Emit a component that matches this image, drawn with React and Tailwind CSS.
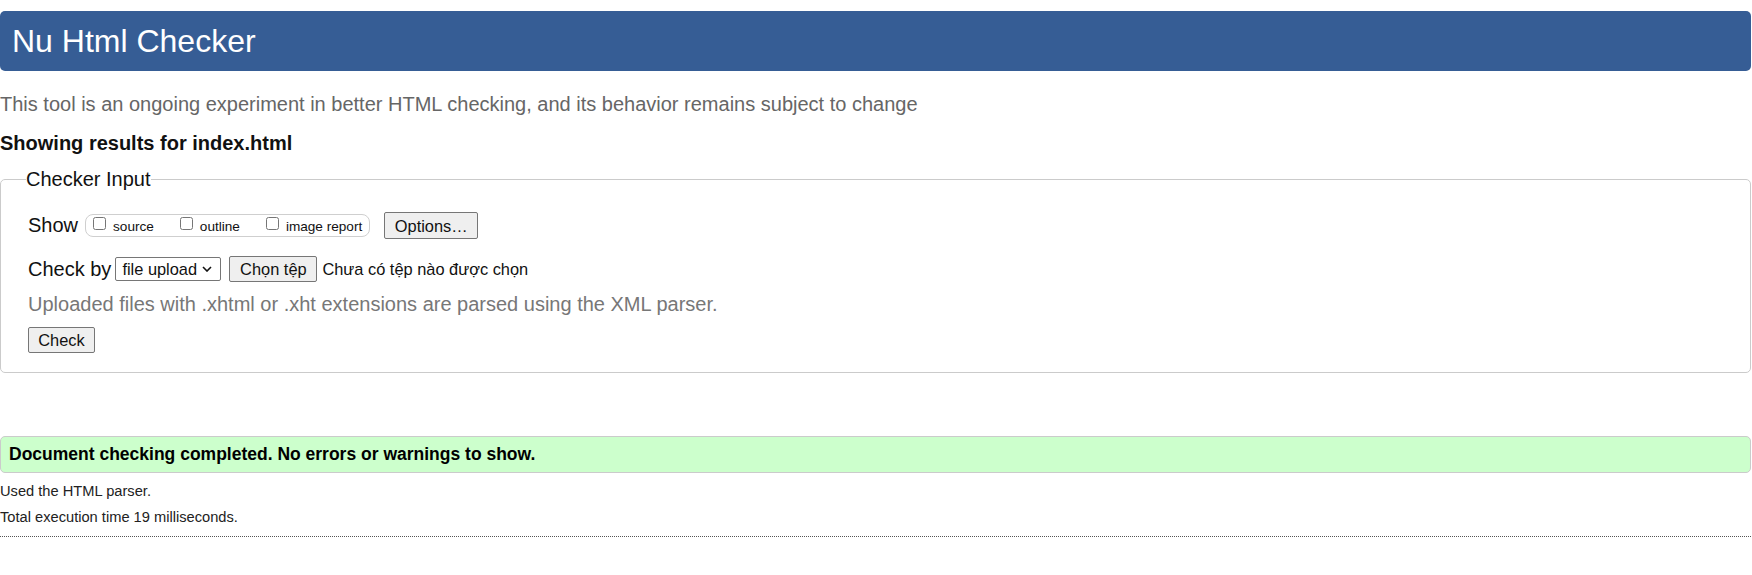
import { useState } from "react";

function Chevron() {
  return (
    <svg
      width="10"
      height="6"
      viewBox="0 0 10 6"
      className="pointer-events-none absolute right-[9px] top-1/2 -translate-y-1/2"
    >
      <path d="M1 1 L5 5 L9 1" fill="none" stroke="#111" strokeWidth="1.6" />
    </svg>
  );
}

export default function App() {
  const [show, setShow] = useState({ source: false, outline: false, image: false });
  const [method, setMethod] = useState("file");

  const toggle = (k) => setShow({ ...show, [k]: !show[k] });

  return (
    <div className="min-h-screen bg-white pt-[11px] pb-[40px] font-['Liberation_Sans',Arial,sans-serif] text-[#111]">
      {/* header */}
      <h1 className="mr-[1px] flex h-[60px] items-center rounded-[5px] bg-[#365d95] px-[12px] text-[32px] font-normal leading-[37px] text-white">
        Nu Html Checker
      </h1>

      <p className="mt-[22px] text-[20px] leading-[23px] text-[#666]">
        This tool is an ongoing experiment in better HTML checking, and its behavior remains subject to change
      </p>

      <p className="mt-[16px] text-[20px] font-bold leading-[23px] text-[#111]">
        Showing results for index.html
      </p>

      {/* checker input */}
      <fieldset className="mt-[13px] mr-[1px] rounded-[5px] border border-[#cbcbcb] pb-[19px] pl-[25px] pr-[25px]">
        <legend className="text-[20px] leading-[23px] text-[#111]">Checker Input</legend>

        <div className="pl-[2px]">
          <div className="mt-[21px] flex h-[27px] items-center">
            <span className="text-[20px] leading-[23px]">Show</span>
            <div className="ml-[7px] flex h-[23px] items-center rounded-[8px] border border-[#cfcfcf] pl-[7px] pr-[7px] text-[13.6px] leading-[16px]">
              <label className="flex items-center">
                <input
                  type="checkbox"
                  checked={show.source}
                  onChange={() => toggle("source")}
                  className="m-0 mr-[7px] -mt-[4px] h-[13px] w-[13px]"
                />
                <span className="mt-[2px]">source</span>
              </label>
              <label className="ml-[26px] flex items-center">
                <input
                  type="checkbox"
                  checked={show.outline}
                  onChange={() => toggle("outline")}
                  className="m-0 mr-[7px] -mt-[4px] h-[13px] w-[13px]"
                />
                <span className="mt-[2px]">outline</span>
              </label>
              <label className="ml-[26px] flex items-center">
                <input
                  type="checkbox"
                  checked={show.image}
                  onChange={() => toggle("image")}
                  className="m-0 mr-[7px] -mt-[4px] h-[13px] w-[13px]"
                />
                <span className="mt-[2px]">image report</span>
              </label>
            </div>
            <button className="ml-[14px] h-[27px] w-[94px] rounded-[2px] border border-[#767676] bg-[#efefef] text-[16.4px] leading-[20px] text-[#111]">
              Options…
            </button>
          </div>

          <div className="mt-[17px] flex h-[26px] items-center">
            <span className="text-[20px] leading-[23px]">Check by</span>
            <div className="relative ml-[4px]">
              <select
                value={method}
                onChange={(e) => setMethod(e.target.value)}
                className="block h-[24px] w-[106px] appearance-none rounded-[2px] border border-[#767676] bg-white pl-[6px] text-[16.4px] leading-[20px] text-[#111] outline-none"
              >
                <option value="address">address</option>
                <option value="file">file upload</option>
                <option value="text">text input</option>
              </select>
              <Chevron />
            </div>
            <button className="ml-[8px] h-[26px] w-[88px] rounded-[2px] border border-[#767676] bg-[#efefef] text-[16.4px] leading-[20px] text-[#111]">
              Chọn tệp
            </button>
            <span className="ml-[5px] text-[16.4px] leading-[20px]">Chưa có tệp nào được chọn</span>
          </div>

          <p className="mt-[11px] text-[20px] leading-[23px] text-[#777]">
            Uploaded files with .xhtml or .xht extensions are parsed using the XML parser.
          </p>

          <button className="mt-[11px] block h-[26px] w-[67px] rounded-[2px] border border-[#767676] bg-[#efefef] text-[16.4px] leading-[20px] text-[#111]">
            Check
          </button>
        </div>
      </fieldset>

      {/* result */}
      <div className="mt-[63px] mr-[1px] rounded-[5px] border border-[#cbcbcb] bg-[#ccffcc] px-[8px] py-[7px]">
        <p className="text-[17.5px] font-bold leading-[21px] text-black">
          Document checking completed. No errors or warnings to show.
        </p>
      </div>

      <p className="mt-[10px] text-[14.67px] leading-[17px] text-[#222]">Used the HTML parser.</p>
      <p className="mt-[9px] text-[14.67px] leading-[17px] text-[#222]">Total execution time 19 milliseconds.</p>

      <hr className="mt-[10px] mr-[1px] border-0 border-t border-dotted border-[#555]" />
    </div>
  );
}
